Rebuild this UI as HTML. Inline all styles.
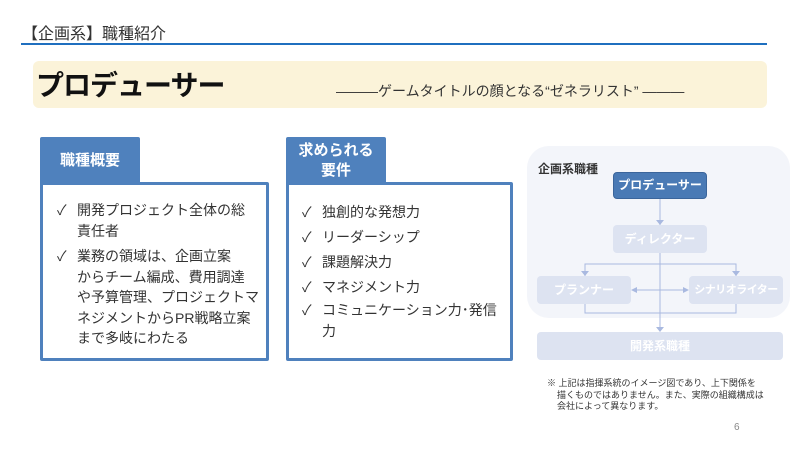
<!DOCTYPE html>
<html><head><meta charset="utf-8"><style>
*{margin:0;padding:0;box-sizing:border-box}
body{width:800px;height:450px;background:#fff;position:relative;overflow:hidden;font-family:"Liberation Sans","Noto Sans CJK JP",sans-serif;color:#333}
.a{position:absolute}
.ln{white-space:nowrap}
.box{position:absolute;border:3px solid #4f81bd;background:#fff;border-radius:2px}
.tab{position:absolute;background:#4f81bd;color:#fff;font-weight:bold;font-size:15px;text-align:center;border-radius:2px 2px 0 0}
.li{position:absolute;font-size:14px;line-height:20.5px;color:#333;white-space:nowrap}
.li span{position:absolute;left:-20px}
.nd{position:absolute;border-radius:4px;font-size:12px;font-weight:bold;color:#fff;text-align:center;white-space:nowrap}
.lt{background:#dde3f1}
</style></head><body>
<div class="a ln" style="left:22px;top:20px;font-size:16px;color:#333">【企画系】職種紹介</div>
<div class="a" style="left:21px;top:43px;width:746px;height:2px;background:#1f6fbf"></div>
<div class="a" style="left:33px;top:61px;width:734px;height:47px;background:#fbf3d9;border-radius:6px"></div>
<div class="a ln" style="left:36px;top:64px;font-size:28px;font-weight:bold;color:#111;letter-spacing:-1px">プロデューサー</div>
<div class="a ln" style="left:336px;top:81px;font-size:14px;color:#333">———ゲームタイトルの顔となる“ゼネラリスト” ———</div>

<div class="tab" style="left:40px;top:137px;width:100px;height:47px;line-height:47px">職種概要</div>
<div class="box" style="left:40px;top:182px;width:229px;height:179px"></div>
<div class="li" style="left:77px;top:200px"><span>✓</span>開発プロジェクト全体の総<br>責任者</div>
<div class="li" style="left:77px;top:246px"><span>✓</span>業務の領域は、企画立案<br>からチーム編成、費用調達<br>や予算管理、プロジェクトマ<br>ネジメントからPR戦略立案<br>まで多岐にわたる</div>

<div class="tab" style="left:286px;top:137px;width:100px;height:47px;line-height:20px;padding-top:4px">求められる<br>要件</div>
<div class="box" style="left:286px;top:182px;width:227px;height:179px"></div>
<div class="li" style="left:322px;top:200px;line-height:25px"><span>✓</span>独創的な発想力<br><span style="top:25px">✓</span>リーダーシップ<br><span style="top:50px">✓</span>課題解決力<br><span style="top:75px">✓</span>マネジメント力</div>
<div class="li" style="left:322px;top:300px"><span>✓</span>コミュニケーション力･発信<br>力</div>

<div class="a" style="left:527px;top:146px;width:263px;height:172px;background:#f3f5fa;border-radius:22px"></div>
<div class="a ln" style="left:538px;top:160px;font-size:12px;font-weight:bold;color:#333">企画系職種</div>
<svg class="a" style="left:0;top:0" width="800" height="450">
<g stroke="#a9b9e0" stroke-width="1" fill="none">
<line x1="660" y1="199" x2="660" y2="329"/>
<polyline points="585,276 585,264 736,264 736,276"/>
<polyline points="585,304 585,313 736,313 736,304"/>
<line x1="634" y1="290" x2="686" y2="290"/>
</g>
<g fill="#a9b9e0">
<polygon points="656,220 664,220 660,225"/>
<polygon points="656,327 664,327 660,332"/>
<polygon points="581,271 589,271 585,276"/>
<polygon points="732,271 740,271 736,276"/>
<polygon points="631,290 637,287 637,293"/>
<polygon points="689,290 683,287 683,293"/>
</g>
</svg>
<div class="nd" style="left:613px;top:172px;width:94px;height:27px;line-height:25px;background:#4a7ab5;border:1px solid #3b659b">プロデューサー</div>
<div class="nd lt" style="left:613px;top:225px;width:94px;height:28px;line-height:28px">ディレクター</div>
<div class="nd lt" style="left:537px;top:276px;width:94px;height:28px;line-height:28px">プランナー</div>
<div class="nd lt" style="left:689px;top:276px;width:94px;height:28px;line-height:28px;font-size:11px;letter-spacing:-0.5px">シナリオライター</div>
<div class="nd lt" style="left:537px;top:332px;width:246px;height:28px;line-height:28px">開発系職種</div>
<div class="a ln" style="left:547px;top:378px;font-size:9px;line-height:11.5px;color:#333">※ 上記は指揮系統のイメージ図であり、上下関係を<br>&nbsp;&nbsp;&nbsp;&nbsp;描くものではありません。また、実際の組織構成は<br>&nbsp;&nbsp;&nbsp;&nbsp;会社によって異なります。</div>
<div class="a" style="left:734px;top:422px;font-size:10px;color:#888">6</div>
</body></html>
